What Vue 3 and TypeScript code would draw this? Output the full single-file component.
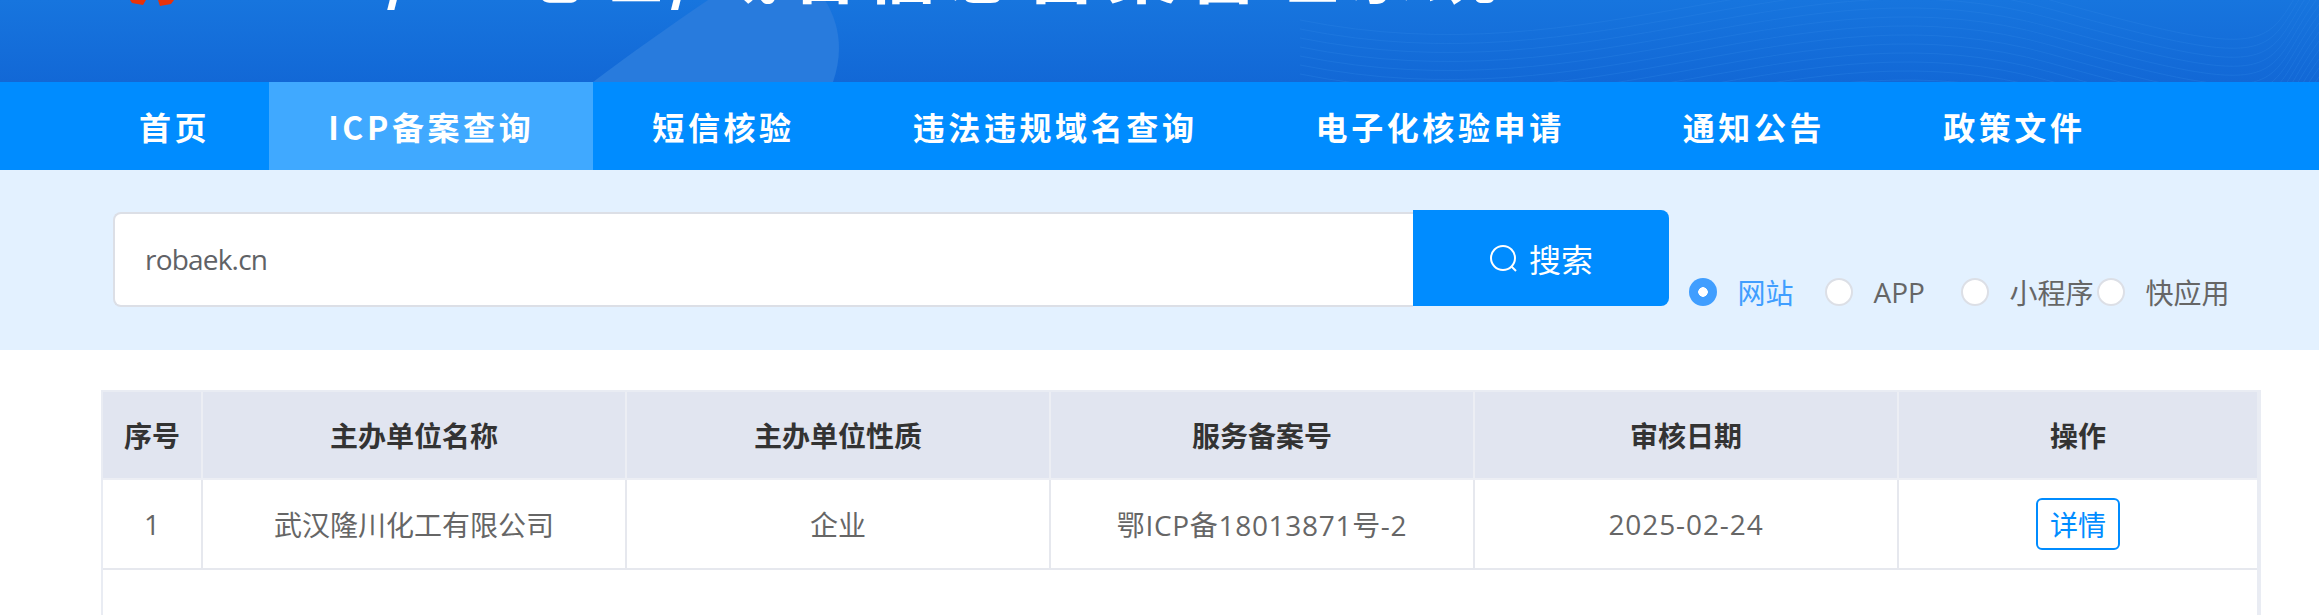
<template>
  <div class="page">
    <header class="banner">
      <svg class="banner-art" width="2319" height="82" viewBox="0 0 2319 82">
        <path class="glow" d="M593 82C630 54 670 26 708 0L825 0C842 28 842 56 833 82Z" />
        <path v-for="d in waves" :key="d" class="wave" :d="d" />
      </svg>
      <svg class="emblem" width="44" height="6" viewBox="0 0 44 6">
        <path d="M0 0H16L13 5L2 3Z" />
        <path d="M28 0H44L41 4L30 6Z" />
      </svg>
      <h1 class="title">ICP/IP地址/域名信息备案管理系统</h1>
    </header>

    <nav class="nav">
      <a v-for="item in navItems" :key="item" class="nav-item" :class="{ active: item === activeNav }">{{ item }}</a>
    </nav>

    <section class="search">
      <div class="search-input">robaek.cn</div>
      <button class="search-btn" type="button">
        <svg width="28" height="28" viewBox="0 0 28 28" fill="none" stroke="#fff" stroke-width="2">
          <circle cx="14" cy="14" r="12" />
          <path d="M22.5 22.5L27 27" />
        </svg>
        <span>搜索</span>
      </button>
      <div class="radios">
        <label v-for="r in radioItems" :key="r" class="radio" :class="{ checked: r === activeRadio }">
          <span class="radio-dot"></span>
          <span class="radio-text">{{ r }}</span>
        </label>
      </div>
    </section>

    <section class="result">
      <table>
        <colgroup>
          <col class="col-no" />
          <col class="col-wide" />
          <col class="col-wide" />
          <col class="col-wide" />
          <col class="col-wide" />
          <col />
        </colgroup>
        <thead>
          <tr>
            <th v-for="h in columns" :key="h">{{ h }}</th>
          </tr>
        </thead>
        <tbody>
          <tr>
            <td>1</td>
            <td>武汉隆川化工有限公司</td>
            <td>企业</td>
            <td class="record">鄂ICP备18013871号-2</td>
            <td class="date">2025-02-24</td>
            <td><button class="detail" type="button">详情</button></td>
          </tr>
        </tbody>
      </table>
    </section>
  </div>
</template>

<script setup lang="ts">
const navItems: string[] = ['首页', 'ICP备案查询', '短信核验', '违法违规域名查询', '电子化核验申请', '通知公告', '政策文件']
const activeNav = 'ICP备案查询'
const radioItems: string[] = ['网站', 'APP', '小程序', '快应用']
const activeRadio = '网站'
const columns: string[] = ['序号', '主办单位名称', '主办单位性质', '服务备案号', '审核日期', '操作']

// faint curved lines on the right of the banner
const waves: string[] = Array.from({ length: 16 }, (_, i) => {
  const y = -30 + i * 9
  return `M1300 ${y + 50}C1600 ${y + 110} 1800 ${y - 40} 2050 ${y + 30}S2260 ${y + 70} 2319 ${y - 10}`
})
</script>

<style>
html,
body {
  margin: 0;
  overflow: hidden;
  background: #fff;
}
</style>

<style scoped>
.page {
  height: 615px;
  overflow: hidden;
  font-family: "Open Sans", "Noto Sans CJK SC", sans-serif;
  color: #666;
}

.banner {
  position: relative;
  display: flex;
  height: 82px;
  padding-left: 130px;
  box-sizing: border-box;
  overflow: hidden;
  background: linear-gradient(180deg, #1775de, #1268d6);
}

.banner-art {
  position: absolute;
  left: 0;
  top: 0;
}

.glow {
  fill: #287bdd;
}

.wave {
  fill: none;
  stroke: #2a85e6;
  stroke-width: 1;
  opacity: 0.35;
}

.emblem {
  position: relative;
  flex: none;
  fill: #e8320a;
}

.title {
  position: relative;
  margin: -70px 0 0 74px;
  font-family: "Noto Sans CJK SC", sans-serif;
  font-size: 72px;
  line-height: 72px;
  font-weight: 700;
  letter-spacing: 8px;
  color: #fff;
  white-space: nowrap;
}

.nav {
  display: flex;
  height: 88px;
  padding-left: 80px;
  background: #008cff;
}

.nav-item {
  padding: 0 59px;
  font-family: "Noto Sans CJK SC", sans-serif;
  font-size: 32px;
  font-weight: 700;
  line-height: 88px;
  letter-spacing: 3.6px;
  color: #fff;
  white-space: nowrap;
}

.nav-item.active {
  background: #40a9ff;
}

.search {
  display: flex;
  align-items: flex-start;
  height: 180px;
  padding: 40px 0 0 113px;
  box-sizing: border-box;
  background: #e3f1ff;
}

.search-input {
  width: 1300px;
  height: 95px;
  margin-top: 2px;
  padding-left: 30px;
  box-sizing: border-box;
  border: 2px solid #dcdfe6;
  border-right: 0;
  border-radius: 8px 0 0 8px;
  background: #fff;
  font-size: 28px;
  line-height: 91px;
  letter-spacing: -0.8px;
  color: #606266;
}

.search-btn {
  display: flex;
  align-items: center;
  justify-content: center;
  gap: 12px;
  width: 256px;
  height: 96px;
  border: 0;
  border-radius: 0 8px 8px 0;
  background: #008cff;
  font-family: "Noto Sans CJK SC", sans-serif;
  font-size: 32px;
  color: #fff;
}

.radios {
  display: grid;
  grid-template-columns: repeat(4, 136px);
  margin: 68px 0 0 20px;
}

.radio {
  display: flex;
  align-items: center;
  gap: 20.5px;
  height: 28px;
  font-size: 28px;
  white-space: nowrap;
}

.radio-dot {
  flex: none;
  width: 28px;
  height: 28px;
  box-sizing: border-box;
  border: 2px solid #dcdfe6;
  border-radius: 50%;
  background: #fff;
}

.radio.checked {
  color: #409eff;
}

.radio.checked .radio-dot {
  border: 0;
  background: radial-gradient(circle, #fff 4.5px, #409eff 5px);
}

.result {
  height: 300px;
  margin: 40px 0 0 101px;
  width: 2160px;
  box-sizing: border-box;
  border: solid #e9ecf3;
  border-width: 2px 4px 0 2px;
}

table {
  width: 100%;
  table-layout: fixed;
  border-collapse: separate;
  border-spacing: 0;
}

.col-no {
  width: 100px;
}

.col-wide {
  width: 424px;
}

th,
td {
  border-right: 2px solid #e6e8ee;
  border-bottom: 2px solid #e6e8ee;
  padding: 0;
  text-align: center;
  font-size: 28px;
}

th:last-child,
td:last-child {
  border-right: 0;
}

th {
  height: 88px;
  box-sizing: border-box;
  border-right-color: #eceef4;
  border-bottom-color: #eceef4;
  background: #e1e5f0;
  font-family: "Noto Sans CJK SC", sans-serif;
  font-weight: 700;
  color: #333;
}

td {
  height: 90px;
  box-sizing: border-box;
}

.record {
  letter-spacing: 0.7px;
}

.date {
  letter-spacing: 0.9px;
}

.detail {
  display: block;
  width: 84px;
  height: 52px;
  margin: 0 auto;
  padding: 0;
  border: 2px solid #008cff;
  border-radius: 6px;
  background: #fff;
  font-family: "Noto Sans CJK SC", sans-serif;
  font-size: 28px;
  color: #008cff;
}
</style>
